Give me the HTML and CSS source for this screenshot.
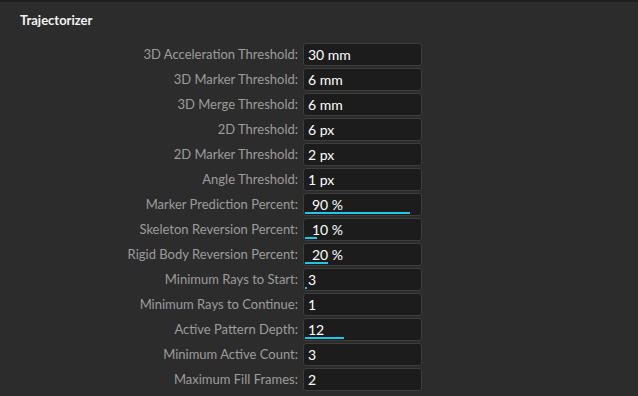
FILE: index.html
```html
<!doctype html>
<html>

<head>
    <title>Trajectorizer</title>
    <meta charset='utf-8'/>
    <link rel="stylesheet" href="styles.css">
</head>

<body>
    <div id="panel">
        <h1 class="title">Trajectorizer</h1>
        <div class="form">
            <label>3D Acceleration Threshold:</label>
            <div class="field"><span>30 mm</span></div>

            <label>3D Marker Threshold:</label>
            <div class="field"><span>6 mm</span></div>

            <label>3D Merge Threshold:</label>
            <div class="field"><span>6 mm</span></div>

            <label>2D Threshold:</label>
            <div class="field"><span>6 px</span></div>

            <label>2D Marker Threshold:</label>
            <div class="field"><span>2 px</span></div>

            <label>Angle Threshold:</label>
            <div class="field"><span>1 px</span></div>

            <label>Marker Prediction Percent:</label>
            <div class="field pct"><span>90 %</span><div class="bar" style="width:90%"></div></div>

            <label>Skeleton Reversion Percent:</label>
            <div class="field pct"><span>10 %</span><div class="bar" style="width:10%"></div></div>

            <label>Rigid Body Reversion Percent:</label>
            <div class="field pct"><span>20 %</span><div class="bar" style="width:20%"></div></div>

            <label>Minimum Rays to Start:</label>
            <div class="field"><span>3</span><div class="bar" style="width:2px"></div></div>

            <label>Minimum Rays to Continue:</label>
            <div class="field"><span>1</span></div>

            <label>Active Pattern Depth:</label>
            <div class="field"><span>12</span><div class="bar" style="width:33%"></div></div>

            <label>Minimum Active Count:</label>
            <div class="field"><span>3</span></div>

            <label>Maximum Fill Frames:</label>
            <div class="field"><span>2</span></div>
        </div>
    </div>
</body>

</html>
```

FILE: styles.css
```css
*{padding:0;margin:0;box-sizing:border-box;}
html,body{height:100%;}
body{
    background:#2c2c2c;
    font-family:Lato, "Open Sans", sans-serif;
    font-size:13px;
    border-top:2px solid #1f1f1f;
}
#panel{
    padding:9px 20px 0 20px;
}
.title{
    font-size:13px;
    font-weight:bold;
    color:#f2f2f2;
    line-height:18px;
    margin-bottom:14px;
}
/* form rows */
.form{
    display:grid;
    grid-template-columns:278px 119px;
    column-gap:5px;
    row-gap:2px;
}
.form label{
    color:#9c9c9c;
    text-align:right;
    line-height:23px;
    white-space:nowrap;
}
.field{
    position:relative;
    height:23px;
    background:#1c1c1c;
    border:1px solid #3d3d3d;
    border-radius:3px;
    color:#fff;
    font-size:14px;
    line-height:21px;
    padding-left:4px;
}
.field.pct{ padding-left:8px; }
.field .bar{
    position:absolute;
    left:1px;
    bottom:1px;
    height:2px;
    background:#1ec8e4;
}
```
